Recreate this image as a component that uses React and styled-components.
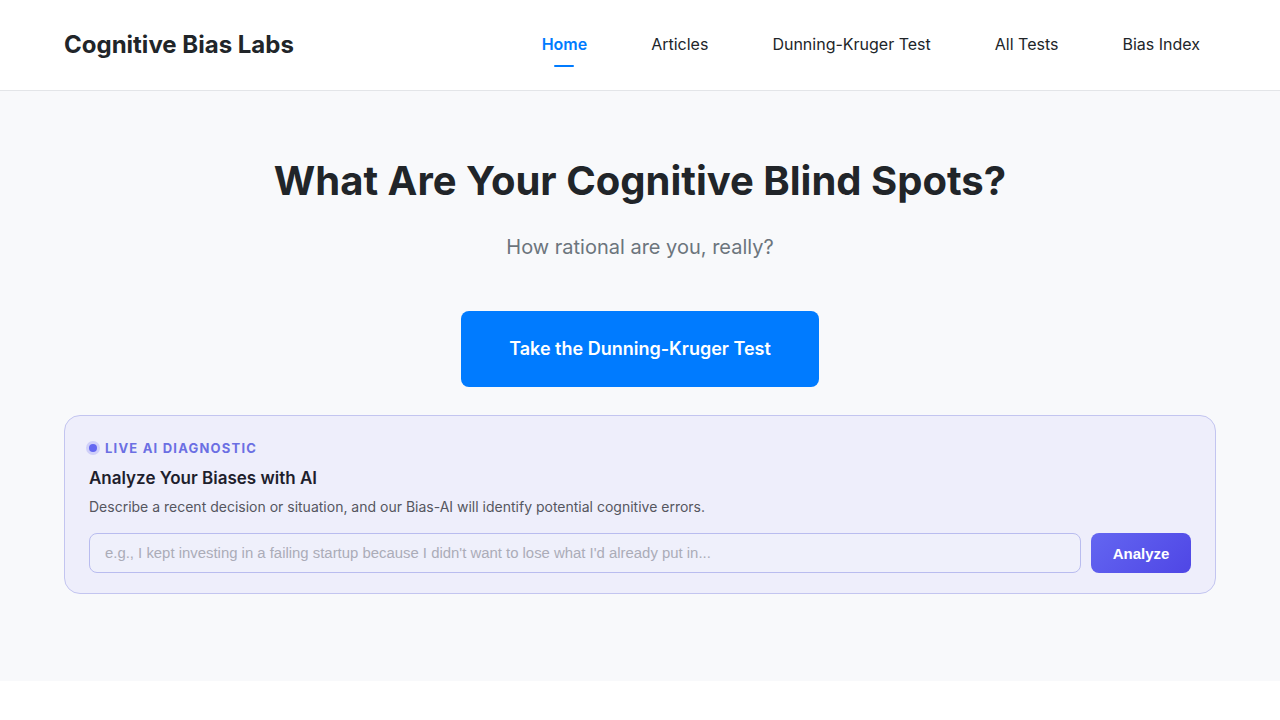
import React from 'react';
import styled, { createGlobalStyle } from 'styled-components';

const GlobalStyle = createGlobalStyle`
  * { box-sizing: border-box; }
  body {
    margin: 0;
    background: #ffffff;
    font-family: Inter, "Noto Sans", sans-serif;
    color: #212529;
  }
`;

const Header = styled.header`
  height: 91px;
  background: #ffffff;
  border-bottom: 1px solid #e3e5e8;
`;

const HeaderInner = styled.div`
  height: 100%;
  padding: 0 64px 2px;
  display: flex;
  align-items: center;
  justify-content: space-between;
`;

const Logo = styled.a`
  font-size: 24px;
  font-weight: 700;
  color: #212529;
  text-decoration: none;
`;

const Nav = styled.nav`
  display: flex;
  gap: 64px;
  padding-right: 16px;
`;

const NavLink = styled.a`
  position: relative;
  font-size: 16px;
  font-weight: ${(p) => (p.$active ? 600 : 400)};
  color: ${(p) => (p.$active ? '#007bff' : '#212529')};
  text-decoration: none;
  line-height: 24px;

  &::after {
    content: '';
    display: ${(p) => (p.$active ? 'block' : 'none')};
    position: absolute;
    left: 50%;
    bottom: -11px;
    width: 20px;
    height: 2px;
    margin-left: -10px;
    background: #007bff;
    border-radius: 1px;
  }
`;

const Hero = styled.section`
  background: #f8f9fb;
  padding: 66px 64px 87px;
  display: flex;
  flex-direction: column;
  align-items: center;
`;

const Title = styled.h1`
  margin: 0;
  font-size: 40px;
  line-height: 48px;
  font-weight: 700;
  color: #212529;
`;

const Subtitle = styled.p`
  margin: 26px 0 0;
  font-size: 20px;
  line-height: 32px;
  color: #6c757d;
`;

const PrimaryButton = styled.a`
  margin-top: 48px;
  display: inline-flex;
  align-items: center;
  justify-content: center;
  width: 358px;
  height: 76px;
  padding-bottom: 2px;
  background: #007bff;
  color: #ffffff;
  border-radius: 8px;
  font-size: 18px;
  font-weight: 600;
  text-decoration: none;
`;

const Card = styled.div`
  align-self: stretch;
  margin-top: 28px;
  padding: 24px 24px 20px;
  background: #eeeefb;
  border: 1px solid #c3c5f0;
  border-radius: 16px;
`;

const Badge = styled.div`
  display: flex;
  align-items: center;
  gap: 8px;
  height: 16px;
  font-size: 13px;
  font-weight: 700;
  letter-spacing: 1.2px;
  text-transform: uppercase;
  color: #6b6fe3;
`;

const Dot = styled.span`
  width: 8px;
  height: 8px;
  border-radius: 50%;
  background: #6366f1;
  box-shadow: 0 0 0 3px rgba(99, 102, 241, 0.22);
`;

const CardTitle = styled.h2`
  margin: 10px 0 0;
  font-size: 17px;
  line-height: 24px;
  font-weight: 600;
  color: #1e1e2d;
`;

const CardText = styled.p`
  margin: 7px 0 0;
  font-size: 14px;
  line-height: 20px;
  color: #55565f;
`;

const Form = styled.form`
  margin-top: 16px;
  display: flex;
  gap: 10px;
`;

const Input = styled.input`
  flex: 1;
  height: 40px;
  padding: 0 15px;
  border: 1px solid #b9bcef;
  border-radius: 8px;
  background: #eff0fb;
  font-family: "Liberation Sans", Arial, sans-serif;
  font-size: 14.9px;
  color: #333;
  outline: none;

  &::placeholder {
    color: #abacb8;
  }
`;

const AnalyzeButton = styled.button`
  width: 100px;
  height: 40px;
  border: none;
  border-radius: 8px;
  background: linear-gradient(135deg, #6366f1 0%, #4f46e5 100%);
  color: #ffffff;
  font-family: "Liberation Sans", Arial, sans-serif;
  font-size: 15px;
  font-weight: 700;
  cursor: pointer;
`;

const navItems = ['Home', 'Articles', 'Dunning-Kruger Test', 'All Tests', 'Bias Index'];

export default function App() {
  return (
    <>
      <GlobalStyle />
      <Header>
        <HeaderInner>
          <Logo href="#">Cognitive Bias Labs</Logo>
          <Nav>
            {navItems.map((item, i) => (
              <NavLink key={item} href="#" $active={i === 0}>
                {item}
              </NavLink>
            ))}
          </Nav>
        </HeaderInner>
      </Header>
      <Hero>
        <Title>What Are Your Cognitive Blind Spots?</Title>
        <Subtitle>How rational are you, really?</Subtitle>
        <PrimaryButton href="#">Take the Dunning-Kruger Test</PrimaryButton>
        <Card>
          <Badge>
            <Dot />
            Live AI Diagnostic
          </Badge>
          <CardTitle>Analyze Your Biases with AI</CardTitle>
          <CardText>
            Describe a recent decision or situation, and our Bias-AI will identify potential cognitive errors.
          </CardText>
          <Form onSubmit={(e) => e.preventDefault()}>
            <Input placeholder="e.g., I kept investing in a failing startup because I didn't want to lose what I'd already put in..." />
            <AnalyzeButton type="submit">Analyze</AnalyzeButton>
          </Form>
        </Card>
      </Hero>
    </>
  );
}
